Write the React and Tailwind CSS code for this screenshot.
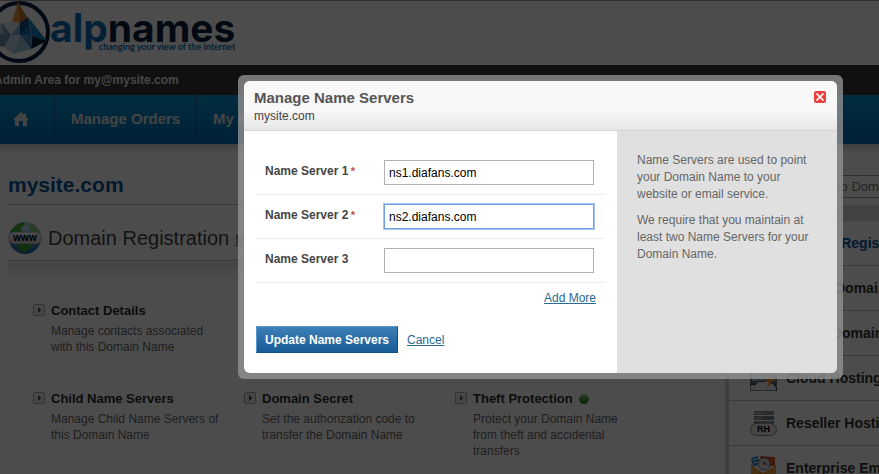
import { useState } from 'react';

const features = [
  { title: 'Contact Details', text: 'Manage contacts associated with this Domain Name', position: 'col-start-1 row-start-1' },
  { title: 'Child Name Servers', text: 'Manage Child Name Servers of this Domain Name', position: 'col-start-1 row-start-2' },
  { title: 'Domain Secret', text: 'Set the authorization code to transfer the Domain Name', position: 'col-start-2 row-start-2' },
  { title: 'Theft Protection', text: 'Protect your Domain Name from theft and accidental transfers', position: 'col-start-3 row-start-2', active: true },
];

const products = [
  { name: 'Domain Registration', current: true },
  { name: 'Renew Domain' },
  { name: 'Check Domain' },
  { name: 'Cloud Hosting', icon: CloudIcon },
  { name: 'Reseller Hosting', icon: ResellerIcon },
  { name: 'Enterprise Email', icon: MailIcon },
];

function LogoMark() {
  return (
    <svg viewBox="0 0 50 64" className="h-16 w-[50px] shrink-0" aria-hidden="true">
      <circle cx="19" cy="31" r="29" fill="#fff" stroke="#07213d" strokeWidth="4" />
      <path d="M18 1 L28 18 L20 22 L12 21 Z" fill="#ef9a3c" />
      <path d="M18 1 L28 18 L20 22 Z" fill="#c9752a" />
      <path d="M12 21 L20 22 L11 34 L2 22 Z" fill="#dbe8f1" />
      <path d="M20 22 L28 16 L31 34 L20 34 Z" fill="#0e4a7c" />
      <path d="M20 22 L20 34 L11 34 Z" fill="#7fa8c6" />
      <path d="M28 16 L47 40 L32 35 Z" fill="#1a7fc0" />
      <path d="M28 24 L32 35 L20 34 Z" fill="#0a6db4" />
      <path d="M32 35 L47 40 L31 48 Z" fill="#07213d" />
      <path d="M20 34 L32 35 L31 48 Z" fill="#4c86b0" />
      <path d="M20 34 L31 48 L12 53 Z" fill="#9dbfd6" />
      <path d="M11 34 L20 34 L12 53 L4 46 Z" fill="#c4d8e6" />
      <path d="M2 22 L11 34 L4 46 L-6 44 Z" fill="#6e97b5" />
      <path d="M-6 30 L2 22 L4 34 Z" fill="#a9c5d8" />
    </svg>
  );
}

function HomeIcon() {
  return (
    <svg viewBox="0 0 16 14" className="mb-0.5 h-3.5 w-4" fill="#e4e4e4" aria-hidden="true">
      <path d="M8 0 L11 2.8 V1.5 H13 V4.6 L16 7.6 H14 V14 H10 V9 H6 V14 H2 V7.6 H0 Z" />
    </svg>
  );
}

function GlobeIcon() {
  return (
    <div className="relative flex h-[34px] w-[34px] shrink-0 items-center justify-center">
      <svg viewBox="0 0 34 34" className="absolute inset-0" aria-hidden="true">
        <defs>
          <radialGradient id="sea" cx="50%" cy="20%" r="80%">
            <stop offset="0" stopColor="#cfe6f5" />
            <stop offset="0.6" stopColor="#4d94c8" />
            <stop offset="1" stopColor="#1c5c96" />
          </radialGradient>
          <linearGradient id="pill" x1="0" y1="0" x2="0" y2="1">
            <stop offset="0" stopColor="#fff" />
            <stop offset="1" stopColor="#c4c4c4" />
          </linearGradient>
        </defs>
        <circle cx="17" cy="17" r="16" fill="url(#sea)" />
        <path d="M3 10 Q8 2 15 1 L17 4 L13 7 L14 11 H2 Z" fill="#3fae35" />
        <path d="M21 2 Q29 5 32 12 H26 L22 8 Z" fill="#8ccf7c" />
        <path d="M9 22 H22 L23 26 L16 32 L11 28 Z" fill="#2fa22c" />
        <rect x="0.5" y="11" width="33" height="12" rx="6" fill="url(#pill)" stroke="#999" strokeWidth="0.6" />
      </svg>
      <span className="relative text-[10px] leading-3 font-bold text-black">www</span>
    </div>
  );
}

function ArrowIcon() {
  return (
    <svg viewBox="0 0 12 12" className="mt-px h-3 w-3 shrink-0" aria-hidden="true">
      <rect x="0.5" y="0.5" width="11" height="11" rx="1" fill="#eee" stroke="#a8a8a8" />
      <path d="M5 3 L8.5 6 L5 9 Z" fill="#555" />
    </svg>
  );
}

function CloudIcon() {
  return (
    <svg viewBox="0 0 27 26" className="h-[26px] w-[27px]" aria-hidden="true">
      <rect width="27" height="26" fill="#5d6f80" />
      <path d="M2 3 H25 V16 H2 Z" fill="#aebdc9" />
      <path d="M3 8 H7 V12 H3 Z M9 8 H22 V9 H9 Z M9 11 H18 V12 H9 Z" fill="#e8eef2" />
      <path d="M0 26 V20 Q4 19 5 20 Q8 14 13 17 Q17 13 20 18 Q26 18 27 26 Z" fill="#e9eef1" stroke="#26333d" />
      <path d="M22 7 L15 17 H19 L16 24 L25 14 H20 L25 8 Z" fill="#ee9a2c" />
    </svg>
  );
}

function ResellerIcon() {
  return (
    <div className="relative h-[26px] w-[27px]">
      <svg viewBox="0 0 27 26" className="absolute inset-0" aria-hidden="true">
        <rect x="4" y="1" width="20" height="4" fill="#8a929c" />
        <rect x="4" y="6" width="20" height="4" fill="#79828d" />
        <rect x="4" y="11" width="20" height="5" fill="#8a929c" />
        <path d="M6 3 H12 M6 8 H12" stroke="#d5dae0" />
        <rect x="0.5" y="13.5" width="26" height="12" rx="6" fill="#e6e6e6" stroke="#8d8d8d" />
      </svg>
      <span className="absolute inset-x-0 bottom-0 text-center text-[9px] leading-[13px] font-bold text-black">RH</span>
    </div>
  );
}

function MailIcon() {
  return (
    <svg viewBox="0 0 27 26" className="h-[26px] w-[27px]" aria-hidden="true">
      <path d="M1 3 L8 1 L11 9 L3 12 Z" fill="#3d91c4" />
      <path d="M3 5 L9 3 M4 8 L10 6" stroke="#fff" />
      <path d="M10 1 L25 2 V11 H12 Z" fill="#d2552a" />
      <circle cx="14" cy="9" r="6" fill="#d9d9d9" stroke="#777" />
      <path d="M14 6 V9 H17" stroke="#333" fill="none" />
      <path d="M1 10 L13 18 L26 10 V26 H1 Z" fill="#f0a040" />
      <path d="M1 26 L11 17 L13 19 L16 17 L26 26 Z" fill="#d67f22" />
    </svg>
  );
}

function Header() {
  return (
    <header className="whitespace-nowrap">
      <div className="flex h-[65px] items-start border-t border-gray-400 bg-white">
        <LogoMark />
        <div className="flex flex-col items-end pt-[5px]">
          <span className="font-['Inter'] text-[39px] leading-[43px] font-bold text-[#07213d]">
            <span className="text-[#0a6db4]">alp</span>names
          </span>
          <span className="-mt-2 font-['Lato'] text-[9px] leading-3 font-bold text-[#0a6db4]">
            changing your view of the internet
          </span>
        </div>
      </div>
      <div className="-ml-1.5 flex h-[30px] items-center bg-[#373737] text-xs font-bold text-[#e8e8e8]">
        Admin Area for my@mysite.com
      </div>
      <nav className="flex h-[49px] items-stretch bg-linear-to-b from-[#0894d2] to-[#006cb8] text-[15px] font-bold text-[#e4e4e4]">
        <a href="#home" aria-label="Home" className="flex w-[55px] items-center border-r border-[#005f9a] pl-[13px]">
          <HomeIcon />
        </a>
        <a href="#orders" className="flex w-[142px] items-center border-r border-[#005f9a] pl-4">Manage Orders</a>
        <a href="#billing" className="flex items-center px-4">My Billing</a>
      </nav>
    </header>
  );
}

function DomainPanel() {
  return (
    <main className="w-[725px] shrink-0 pl-2">
      <h1 className="border-b border-[#bbb] pt-[29px] pb-[7px] text-[21px] leading-6 font-bold text-[#0a5496]">mysite.com</h1>
      <div className="flex items-center gap-1.5 border-b border-[#bbb] pt-4 pb-[5px]">
        <GlobeIcon />
        <h2 className="text-xl text-[#444]">Domain Registration</h2>
        <a href="#more" className="mt-1 text-xs text-[#2a6a92] underline">More Details</a>
      </div>
      <div className="mt-px h-4 bg-linear-to-b from-[#e4e4e4] to-white"></div>
      <div className="grid grid-cols-[211px_211px_211px] grid-rows-[88px_88px] pt-[25px] pl-[25px]">
        {features.map((f) => (
          <div key={f.title} className={`flex gap-1.5 ${f.position}`}>
            <ArrowIcon />
            <div className="w-[170px]">
              <h3 className="flex items-center gap-1.5 text-[13px] leading-4 font-bold text-[#2d2d2d]">
                {f.title}
                {f.active && <span className="h-2.5 w-2.5 rounded-full bg-linear-to-b from-[#9ccc80] to-[#067a04]"></span>}
              </h3>
              <p className="mt-1 text-xs leading-4 text-[#6a6a6a]">{f.text}</p>
            </div>
          </div>
        ))}
      </div>
    </main>
  );
}

function Sidebar() {
  return (
    <aside className="flex-1 overflow-hidden border-l-4 border-[#d4d4d4] pt-[31px] whitespace-nowrap">
      <input
        type="text"
        aria-label="Go to Domain"
        placeholder="Go to Domain"
        className="ml-20 block h-[23px] w-40 border border-gray-400 px-1.5 text-[13px] placeholder:text-[#777]"
      />
      <div className="mt-[7px] h-4 bg-[#dedede]"></div>
      <ul>
        {products.map(({ name, icon: Icon, current }) => (
          <li key={name} className="flex h-[45px] items-center gap-[9px] border-b border-[#c4c4c4] pl-[21px]">
            <span className="w-[27px] shrink-0">{Icon && <Icon />}</span>
            <a href="#product" className={`text-sm font-bold ${current ? 'text-[#0a5496]' : 'text-[#333]'}`}>{name}</a>
          </li>
        ))}
      </ul>
    </aside>
  );
}

function NameServersDialog() {
  const [servers, setServers] = useState(['ns1.diafans.com', 'ns2.diafans.com', '']);

  const updateServer = (idx, value) => {
    setServers(servers.map((s, i) => (i === idx ? value : s)));
  };

  return (
    <div role="dialog" aria-labelledby="dialog-title" className="w-[605px] rounded-md bg-[#969696]/77 p-1.5">
      <div className="overflow-hidden rounded-md bg-white">
        <div className="flex h-[50px] items-start justify-between border-b border-[#d6d6d6] bg-linear-to-b from-[#f8f8f8] from-60% to-[#e6e6e6] pt-2 pr-[11px] pl-2.5">
          <div>
            <h2 id="dialog-title" className="text-[15px] leading-[18px] font-bold text-[#555]">Manage Name Servers</h2>
            <p className="text-xs leading-[18px] text-[#444]">mysite.com</p>
          </div>
          <button type="button" aria-label="Close" className="mt-0.5 h-3 w-3 rounded-xs bg-[#e64141]">
            <svg viewBox="0 0 12 12" className="h-3 w-3" aria-hidden="true">
              <path d="M2.5 2.5 L9.5 9.5 M9.5 2.5 L2.5 9.5" stroke="#fff" strokeWidth="1.7" />
            </svg>
          </button>
        </div>
        <div className="flex">
          <form className="flex-1 py-5 pl-3" onSubmit={(e) => e.preventDefault()}>
            {servers.map((server, idx) => (
              <div key={idx} className="mr-3 flex items-start border-b border-[#eee] py-[9px] pl-[9px]">
                <label htmlFor={`ns-${idx}`} className="w-[119px] pt-[3px] text-xs leading-4 font-bold text-[#444]">
                  Name Server {idx + 1} {idx < 2 && <span className="-ml-px text-[11px] text-[#c0504d]">*</span>}
                </label>
                <input
                  id={`ns-${idx}`}
                  type="text"
                  value={server}
                  onChange={(e) => updateServer(idx, e.target.value)}
                  className={`h-[25px] w-[210px] border bg-white px-1 text-xs text-black outline-none ${
                    idx === 1 ? 'border-[#6f9fdc] ring-1 ring-[#a5c6f2]' : 'border-[#b0b0b0]'
                  }`}
                />
              </div>
            ))}
            <div className="mt-[7px] flex justify-end pr-[21px] text-xs leading-4">
              <a href="#add" className="text-[#2a6a92] underline">Add More</a>
            </div>
            <div className="mt-5 flex items-center gap-[9px] text-xs">
              <button
                type="submit"
                className="h-[27px] w-[142px] border border-t-[#5b97cf] border-r-[#0d4f85] border-b-[#0d4f85] border-l-[#5b97cf] bg-linear-to-b from-[#3d80b8] to-[#165c98] font-bold whitespace-nowrap text-white"
              >
                Update Name Servers
              </button>
              <a href="#cancel" className="text-[#2a6a92] underline">Cancel</a>
            </div>
          </form>
          <div className="w-[220px] space-y-[9px] bg-[#e0e0e0] px-5 pt-[21px] text-xs leading-[17px] text-[#666]">
            <p>Name Servers are used to point your Domain Name to your website or email service.</p>
            <p>We require that you maintain at least two Name Servers for your Domain Name.</p>
          </div>
        </div>
      </div>
    </div>
  );
}

export default function App() {
  return (
    <div className="relative h-screen overflow-hidden bg-white font-['Liberation_Sans',Arial,sans-serif]">
      <Header />
      <div className="flex bg-linear-to-b from-[#d0d0d0] to-white to-[8px]">
        <DomainPanel />
        <Sidebar />
      </div>
      <div className="absolute inset-0 bg-black/70 pt-[75px] pl-[238px]">
        <NameServersDialog />
      </div>
    </div>
  );
}
